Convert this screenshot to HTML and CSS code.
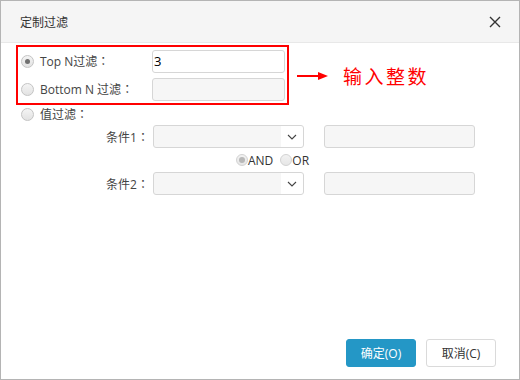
FILE: index.html
```html
<!DOCTYPE html>
<html lang="zh">
<head>
<meta charset="utf-8">
<link rel="stylesheet" href="styles.css">
</head>
<body>
<div class="dialog">
  <div class="header">
    <span class="title">定制过滤</span>
    <svg class="close" width="12" height="12" viewBox="0 0 12 12"><path d="M1 1 L11 11 M11 1 L1 11" stroke="#333" stroke-width="1.4" fill="none"/></svg>
  </div>
  <div class="body">
    <div class="top-area">
      <div class="redbox">
        <div class="row">
          <span class="radio checked"></span>
          <span class="label">Top N过滤<span class="colon" lang="zh-TW">：</span></span>
          <div class="input">3</div>
        </div>
        <div class="row">
          <span class="radio"></span>
          <span class="label">Bottom N 过滤<span class="colon" lang="zh-TW">：</span></span>
          <div class="input disabled"></div>
        </div>
      </div>
      <div class="note">
        <svg class="arrow" width="32" height="10" viewBox="0 0 32 10"><path d="M0 5 H22" stroke="#f00" stroke-width="2"/><path d="M21 1 L31 5 L21 9 Z" fill="#f00"/></svg>
        <span class="note-text">输入整数</span>
      </div>
    </div>
    <div class="row value-row">
      <span class="radio"></span>
      <span class="label">值过滤<span class="colon" lang="zh-TW">：</span></span>
    </div>
    <div class="cond-row">
      <span class="cond-label">条件1<span class="colon" lang="zh-TW">：</span></span>
      <div class="select"><svg width="10" height="6" viewBox="0 0 10 6"><path d="M1 1 L5 5 L9 1" stroke="#444" stroke-width="1.1" fill="none"/></svg></div>
      <div class="input wide disabled"></div>
    </div>
    <div class="logic-row">
      <span class="radio small checked"></span><span class="logic">AND</span>
      <span class="radio small"></span><span class="logic">OR</span>
    </div>
    <div class="cond-row">
      <span class="cond-label">条件2<span class="colon" lang="zh-TW">：</span></span>
      <div class="select"><svg width="10" height="6" viewBox="0 0 10 6"><path d="M1 1 L5 5 L9 1" stroke="#444" stroke-width="1.1" fill="none"/></svg></div>
      <div class="input wide disabled"></div>
    </div>
  </div>
  <div class="footer">
    <button class="btn primary">确定(O)</button>
    <button class="btn">取消(C)</button>
  </div>
</div>
</body>
</html>
```

FILE: styles.css
```css
html, body {
  margin: 0;
  padding: 0;
  background: #fff;
}
body {
  font-family: "Open Sans", "Noto Sans CJK SC", sans-serif;
  font-size: 12px;
  color: #333;
}
.dialog {
  box-sizing: border-box;
  width: 520px;
  height: 380px;
  border: 1px solid #b4b4b4;
  display: flex;
  flex-direction: column;
  background: #fff;
}
.header {
  height: 41px;
  flex: none;
  background: #f5f5f5;
  border-bottom: 1px solid #e8e8e8;
  display: flex;
  align-items: center;
  justify-content: space-between;
  padding: 0 18px 0 19px;
}
.title {
  font-size: 12px;
  color: #333;
}
.close {
  display: block;
}
.body {
  flex: 1;
  padding: 2px 0 0 15px;
}
.top-area {
  display: flex;
  align-items: center;
}
.redbox {
  box-sizing: border-box;
  width: 273px;
  height: 60px;
  border: 2px solid #f00;
  padding: 0 0 0 3px;
}
.row {
  display: flex;
  align-items: center;
  height: 28px;
}
.radio {
  box-sizing: border-box;
  width: 13px;
  height: 13px;
  border-radius: 50%;
  border: 1px solid #c4c4c4;
  background: linear-gradient(#f4f4f4, #e2e2e2);
  margin-right: 6px;
  flex: none;
  display: flex;
  align-items: center;
  justify-content: center;
}
.radio.checked::after {
  content: "";
  width: 5px;
  height: 5px;
  border-radius: 50%;
  background: #707070;
}
.radio.small {
  width: 12px;
  height: 12px;
  margin-right: 0;
  border-color: #d2d2d2;
  background: linear-gradient(#f2f2f2, #e6e6e6);
}
.radio.small.checked::after {
  background: #b8b8b8;
  width: 6px;
  height: 6px;
}
.label {
  width: 112px;
  flex: none;
  color: #444;
}
.colon {
  font-family: "Noto Sans CJK TC", sans-serif;
}
.input {
  box-sizing: border-box;
  width: 133px;
  height: 23px;
  border: 1px solid #d6d6d6;
  border-radius: 3px;
  background: #fff;
  line-height: 21px;
  padding-left: 1px;
  font-size: 13px;
  color: #000;
}
.input.disabled {
  background: #f6f6f6;
}
.input.wide {
  width: 151px;
  margin-left: 20px;
}
.note {
  display: flex;
  align-items: center;
  margin-left: 8px;
  margin-top: 1px;
}
.arrow {
  display: block;
}
.note-text {
  margin-left: 14px;
  font-size: 19px;
  letter-spacing: 2.5px;
  color: #f00;
  font-weight: 400;
}
.value-row {
  height: 18px;
  padding-left: 5px;
  margin-bottom: 2px;
}
.cond-row {
  display: flex;
  align-items: center;
  height: 23px;
}
.cond-label {
  box-sizing: border-box;
  width: 137px;
  flex: none;
  text-align: right;
  padding-right: 4px;
  color: #444;
}
.select {
  box-sizing: border-box;
  width: 151px;
  height: 23px;
  border: 1px solid #d6d6d6;
  border-radius: 3px;
  background: linear-gradient(90deg, #f6f6f6 0, #f6f6f6 127px, #fff 127px);
  display: flex;
  align-items: center;
  justify-content: flex-end;
  padding-right: 6px;
}
.select svg {
  display: block;
}
.logic-row {
  display: flex;
  align-items: center;
  height: 24px;
  padding-left: 220px;
}
.logic {
  color: #333;
  font-size: 12px;
  margin-right: 7px;
}
.footer {
  flex: none;
  display: flex;
  justify-content: flex-end;
  gap: 10px;
  padding: 0 23px 12px 0;
}
.btn {
  box-sizing: border-box;
  width: 70px;
  height: 28px;
  border: 1px solid #dadada;
  border-radius: 3px;
  background: #fff;
  font-family: "Open Sans", "Noto Sans CJK SC", sans-serif;
  font-size: 12px;
  color: #333;
  padding: 0;
}
.btn.primary {
  background: #2497c6;
  border-color: #2497c6;
  color: #fff;
}
```
